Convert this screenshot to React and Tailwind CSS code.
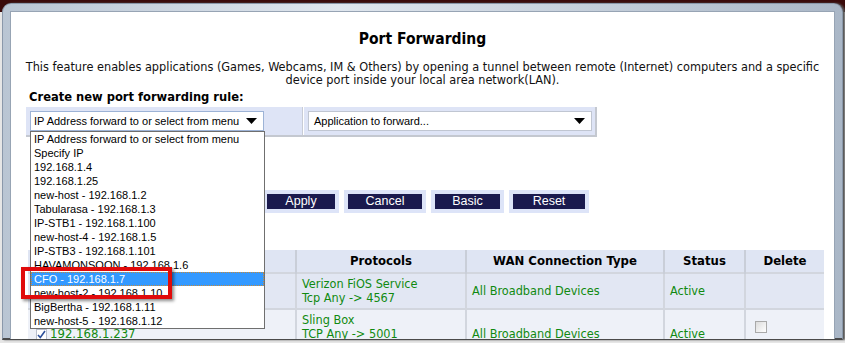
const HOSTS = [
  "IP Address forward to or select from menu",
  "Specify IP",
  "192.168.1.4",
  "192.168.1.25",
  "new-host - 192.168.1.2",
  "Tabularasa - 192.168.1.3",
  "IP-STB1 - 192.168.1.100",
  "new-host-4 - 192.168.1.5",
  "IP-STB3 - 192.168.1.101",
  "HAVAMONSOON - 192.168.1.6",
  "CFO - 192.168.1.7",
  "new-host-2 - 192.168.1.10",
  "BigBertha - 192.168.1.11",
  "new-host-5 - 192.168.1.12",
];

const BUTTONS = [
  { label: "Apply", width: "w-[68px]" },
  { label: "Cancel", width: "w-[74px]" },
  { label: "Basic", width: "w-[65px]" },
  { label: "Reset", width: "w-[72px]" },
];

function Arrow() {
  return (
    <svg width="11" height="6" viewBox="0 0 11 6" className="shrink-0">
      <path d="M0 0h11L5.5 6z" fill="#000" />
    </svg>
  );
}

export default function App() {
  return (
    <div className="h-[343px] w-[845px] overflow-hidden bg-[linear-gradient(to_bottom,#3a0a0a_0,#3a0a0a_12px,#e6e6e6_12px)] font-['DejaVu_Sans_Condensed','DejaVu_Sans',sans-serif]">
      <div className="ml-[2px] mt-[3px] h-[337px] w-[841px] rounded-t-[9px] border-x border-t border-[#8a98aa] border-b-2 border-b-[#4a4a4a] bg-[linear-gradient(to_right,#b9c5d3,#dfe6ee_40%,#aab7c7)] px-[7px] pt-[7px] shadow-[2px_0_2px_#555]">
        <div className="relative h-[328px] w-[825px] overflow-hidden border-x border-t border-[#97a4b4] bg-white">
          <h1 className="mt-[18px] text-center text-[15.5px] font-bold leading-[18px] text-black">
            Port Forwarding
          </h1>
          <p className="mx-auto mt-[12px] w-[815px] text-center text-[12.6px] leading-[13px] text-[#111]">
            This feature enables applications (Games, Webcams, IM &amp; Others) by opening a tunnel between remote (Internet) computers and a specific device port inside your local area network(LAN).
          </p>
          <div className="ml-[18px] mt-[3px] text-[12.8px] font-bold leading-[16px] text-black">
            Create new port forwarding rule:
          </div>

          <div className="ml-[15px] mt-[2px] flex h-[30px] w-[571px] items-center border-b-2 border-r-2 border-[#c4c8d0] bg-[#dee4f6] font-['Liberation_Sans',sans-serif] text-[11px] text-black">
            <div className="relative ml-[4px] w-[234px]">
              <div className="flex h-[20px] items-center justify-between whitespace-nowrap border border-[#9db3d6] bg-white pl-[3px] pr-[6px]">
                <span>IP Address forward to or select from menu</span>
                <Arrow />
              </div>
              <ul className="absolute left-0 top-[20px] z-10 w-[235px] border border-[#6f6f6f] bg-white">
                {HOSTS.map((h) => (
                  <li
                    key={h}
                    className={`h-[14px] whitespace-nowrap pl-[2px] leading-[13px] ${
                      h.startsWith("CFO")
                        ? "border border-dotted border-[#c58a3a] bg-[#3399ff] text-white"
                        : "border border-transparent"
                    }`}
                  >
                    {h}
                  </li>
                ))}
              </ul>
            </div>
            <div className="ml-[38px] h-full w-[2px] border-l border-r border-l-[#c8ccd6] border-r-white" />
            <div className="ml-[4px] flex h-[20px] w-[284px] items-center justify-between border border-[#c0c6d2] bg-white pl-[5px] pr-[6px]">
              <span>Application to forward...</span>
              <Arrow />
            </div>
          </div>

          <div className="ml-[252px] mt-[53px] flex gap-[5px] font-['Liberation_Sans',sans-serif] text-[12.5px]">
            {BUTTONS.map((b) => (
              <div key={b.label} className="bg-[#dde4f8] p-[4px]">
                <div className={`flex h-[15px] items-center justify-center bg-[#1a1a4e] text-white ${b.width}`}>
                  {b.label}
                </div>
              </div>
            ))}
          </div>

          <table className="ml-[17px] mt-[37px] w-[796px] border-collapse text-[12.6px] leading-[14px]">
            <thead>
              <tr className="h-[23px] bg-[#dfe5f3] text-[13px] font-bold text-black">
                <th className="w-[268px] border-r-2 border-[#c9ced8]" />
                <th className="w-[170px] border-r-2 border-[#c9ced8] text-center">Protocols</th>
                <th className="w-[198px] border-r-2 border-[#c9ced8] text-center">WAN Connection Type</th>
                <th className="w-[81px] border-r-2 border-[#c9ced8] text-center">Status</th>
                <th className="text-center">Delete</th>
              </tr>
            </thead>
            <tbody className="text-[#108a10]">
              <tr className="h-[36px] border-t-2 border-[#d2d6de] bg-[#e2e7f3]">
                <td className="border-r-2 border-[#d2d6de]" />
                <td className="border-r-2 border-[#d2d6de] px-[5px]">
                  Verizon FiOS Service
                  <br />
                  Tcp Any -&gt; 4567
                </td>
                <td className="border-r-2 border-[#d2d6de] px-[5px]">All Broadband Devices</td>
                <td className="border-r-2 border-[#d2d6de] px-[5px]">Active</td>
                <td />
              </tr>
              <tr className="h-[36px] border-t-2 border-[#d2d6de] bg-[#eef1f8] align-top">
                <td className="border-r-2 border-[#d2d6de] pl-[8px] pt-[17px]">
                  <span className="inline-flex items-center gap-[3px] text-[13px]">
                    <span className="inline-flex h-[11px] w-[11px] items-center justify-center border border-[#b8bfcc] bg-white">
                      <svg width="9" height="9" viewBox="0 0 9 9">
                        <path d="M1 5l2.3 2.5L8 1" stroke="#2c4f9a" strokeWidth="1.6" fill="none" />
                      </svg>
                    </span>
                    192.168.1.237
                  </span>
                </td>
                <td className="border-r-2 border-[#d2d6de] px-[5px] pt-[3px]">
                  Sling Box
                  <br />
                  TCP Any -&gt; 5001
                </td>
                <td className="border-r-2 border-[#d2d6de] px-[5px] pt-[17px]">All Broadband Devices</td>
                <td className="border-r-2 border-[#d2d6de] px-[5px] pt-[17px]">Active</td>
                <td className="pl-[9px] pt-[11px]">
                  <span className="block h-[12px] w-[12px] border border-[#a9a9a9] bg-[linear-gradient(135deg,#dcdcdc,#fff)]" />
                </td>
              </tr>
            </tbody>
          </table>

          <div className="absolute left-[10px] top-[255px] z-20 h-[32px] w-[151px] border-[4px] border-[#e00b0b] shadow-[2px_2px_3px_rgba(0,0,0,0.45)]" />
        </div>
      </div>
    </div>
  );
}
